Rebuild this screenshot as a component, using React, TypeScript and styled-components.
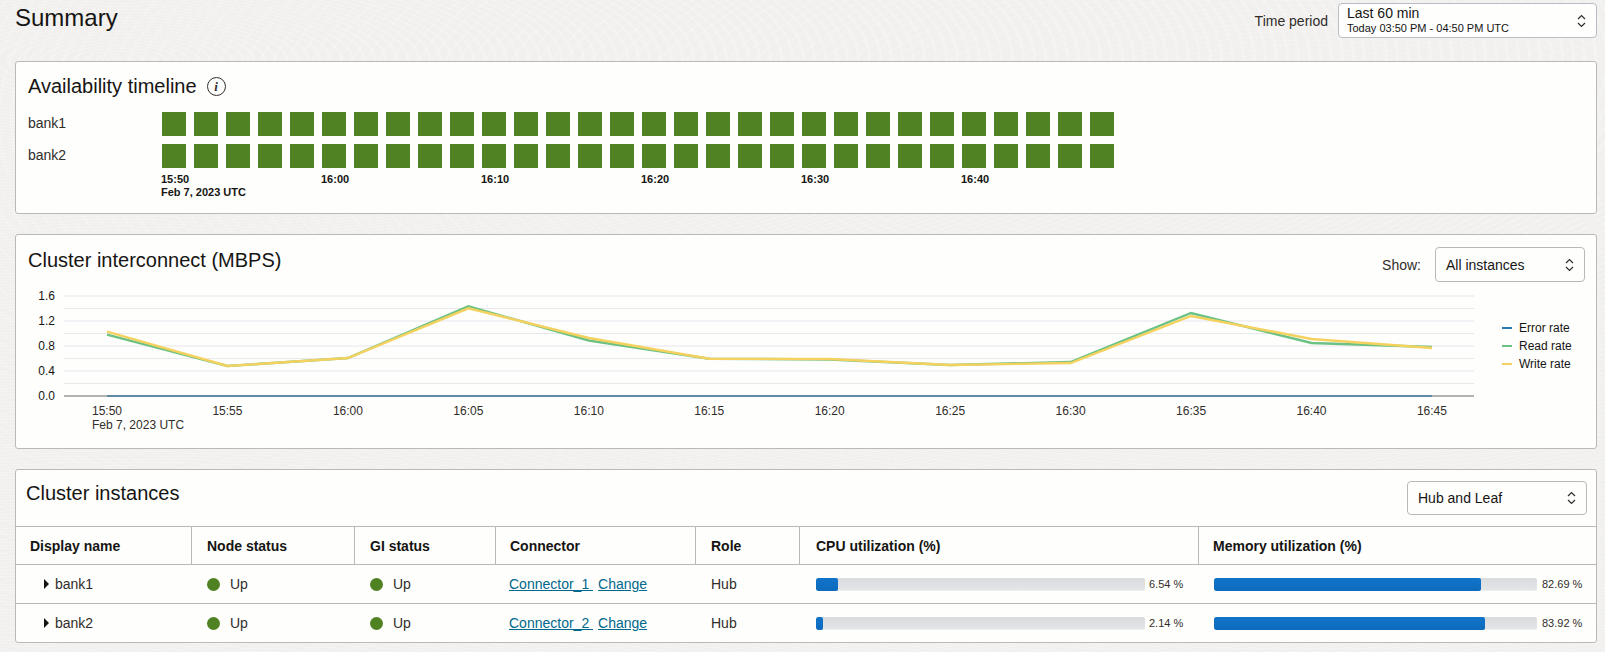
import React from 'react';
import styled, { createGlobalStyle } from 'styled-components';

const GlobalStyle = createGlobalStyle`
  html, body {
    margin: 0;
    padding: 0;
    background: #f1f0ee;
  }
  body {
    font-family: "Liberation Sans", Arial, sans-serif;
    color: #161513;
  }
`;

const Page = styled.div`
  width: 1605px;
  height: 652px;
  box-sizing: border-box;
  padding: 0 8px 0 15px;
  overflow: hidden;
  background-color: #f1f0ee;
  background-image:
    repeating-radial-gradient(ellipse 160% 100% at 120px 60px, rgba(255,255,255,0.2) 0 3px, transparent 3px 11px),
    repeating-radial-gradient(ellipse 120% 100% at 1300px 120px, rgba(255,255,255,0.16) 0 3px, transparent 3px 13px);
`;

const PageHeader = styled.header`
  height: 61px;
  display: flex;
  justify-content: space-between;
  align-items: flex-start;
`;

const PageTitle = styled.h1`
  margin: 4px 0 0;
  font-size: 24px;
  line-height: 28px;
  font-weight: 400;
`;

const PeriodGroup = styled.div`
  display: flex;
  align-items: center;
  gap: 10px;
  margin-top: 3px;
`;

const FieldLabel = styled.span`
  font-size: 14px;
  color: #312d2a;
`;

const SelectBox = styled.div<{ $w: number; $h: number }>`
  position: relative;
  box-sizing: border-box;
  width: ${p => p.$w}px;
  height: ${p => p.$h}px;
  padding: 0 10px;
  display: flex;
  flex-direction: column;
  justify-content: center;
  border: 1px solid #bcb8b3;
  border-radius: 4px;
  background: #fefefd;
  font-size: 14px;
  color: #161513;
`;

const PeriodBox = styled(SelectBox)`
  padding: 0 8px;
  border-color: #b9bdc4;
`;

const PeriodMain = styled.span`
  font-size: 14px;
  line-height: 16px;
`;

const PeriodSub = styled.span`
  font-size: 11px;
  line-height: 15px;
`;

const ChevronWrap = styled.span`
  position: absolute;
  right: 10px;
  top: 50%;
  transform: translateY(-50%);
  display: flex;
`;

const Chevrons = () => (
  <ChevronWrap>
    <svg width="9" height="14" viewBox="0 0 9 14" fill="none" stroke="#312d2a" strokeWidth="1.2">
      <path d="M1 5 L4.5 1.5 L8 5" />
      <path d="M1 9 L4.5 12.5 L8 9" />
    </svg>
  </ChevronWrap>
);

const Card = styled.section<{ $h: number; $mb?: number }>`
  box-sizing: border-box;
  width: 1582px;
  height: ${p => p.$h}px;
  margin-bottom: ${p => p.$mb ?? 21}px;
  border: 1px solid #bcb8b3;
  border-radius: 3px;
  background: #fefefc;
  overflow: hidden;
`;

const CardTitle = styled.h2`
  margin: 0;
  font-size: 20px;
  line-height: 24px;
  font-weight: 400;
`;

const TimelineBody = styled.div`
  padding: 12px 12px 0;
`;

const TitleRow = styled.div`
  display: flex;
  align-items: center;
  gap: 10px;
  height: 24px;
  margin-bottom: 14px;
`;

const InfoIcon = styled.span`
  box-sizing: border-box;
  width: 19px;
  height: 19px;
  border: 1.3px solid #312d2a;
  border-radius: 50%;
  display: flex;
  align-items: center;
  justify-content: center;
  font-family: "Liberation Serif", serif;
  font-style: italic;
  font-weight: 700;
  font-size: 13px;
  line-height: 1;
  color: #312d2a;
`;

const TimelineRow = styled.div`
  display: flex;
  align-items: center;
  height: 24px;
  margin-bottom: 8px;
`;

const RowLabel = styled.span`
  width: 134px;
  margin-top: -2px;
  font-size: 14px;
  color: #312d2a;
`;

const Squares = styled.div`
  display: flex;
  gap: 8px;
`;

const Square = styled.span`
  width: 24px;
  height: 24px;
  background: #508223;
`;

const TimeAxis = styled.div`
  display: flex;
  margin: -3px 0 0 133px;
`;

const TimeTick = styled.div`
  width: 156px;
  margin-right: 4px;
  font-size: 11px;
  line-height: 13px;
  font-weight: 700;
  color: #161513;
`;

const ChartHeader = styled.div`
  height: 53px;
  box-sizing: border-box;
  padding: 12px 11px 0 12px;
  display: flex;
  justify-content: space-between;
  align-items: flex-start;
`;

const ChartTitle = styled(CardTitle)`
  margin-top: 1px;
`;

const ShowGroup = styled.div`
  display: flex;
  align-items: center;
  gap: 14px;
`;

const ChartBody = styled.div`
  display: flex;
  padding-left: 12px;
`;

const LegendList = styled.ul`
  list-style: none;
  margin: 33px 0 0 14px;
  padding: 0;
  display: flex;
  flex-direction: column;
  gap: 4px;
`;

const LegendItem = styled.li`
  display: flex;
  align-items: center;
  gap: 7px;
  height: 14px;
  font-size: 12px;
  color: #161513;
`;

const LegendSwatch = styled.span<{ $c: string }>`
  width: 10px;
  height: 2.5px;
  background: ${p => p.$c};
`;

const TableHeader = styled.div`
  height: 56px;
  box-sizing: border-box;
  padding: 11px 9px 0 10px;
  display: flex;
  justify-content: space-between;
  align-items: flex-start;
`;

const GridRow = styled.div<{ $h: number }>`
  display: grid;
  grid-template-columns: 176px 163px 141px 200px 104px 399px 1fr;
  height: ${p => p.$h}px;
  box-sizing: border-box;
  border-top: 1px solid #bcb8b3;
  align-items: center;
`;

const HeadCell = styled.div<{ $last?: boolean; $pad: number }>`
  box-sizing: border-box;
  height: 100%;
  display: flex;
  align-items: center;
  padding-left: ${p => p.$pad}px;
  border-right: ${p => p.$last ? 'none' : '1px solid #bcb8b3'};
  font-size: 14px;
  font-weight: 700;
  color: #161513;
`;

const Cell = styled.div<{ $pad?: number }>`
  box-sizing: border-box;
  padding-left: ${p => p.$pad ?? 15}px;
  display: flex;
  align-items: center;
  font-size: 14px;
  color: #312d2a;
`;

const NameCell = styled(Cell)`
  padding-left: 28px;
  gap: 6px;
`;

const Caret = styled.span`
  width: 0;
  height: 0;
  border-top: 5px solid transparent;
  border-bottom: 5px solid transparent;
  border-left: 5px solid #161513;
`;

const StatusDot = styled.span`
  width: 13px;
  height: 13px;
  border-radius: 50%;
  background: #508223;
  margin-right: 10px;
`;

const LinkText = styled.a`
  color: #00688c;
  text-decoration: underline;
  white-space: pre;
  margin-right: 5px;
`;

const MeterTrack = styled.div<{ $w: number }>`
  width: ${p => p.$w}px;
  height: 13px;
  border-radius: 2px;
  background: linear-gradient(#d9dcdf, #e4e6e8);
  box-shadow: inset 0 -1px 0 #eceef0;
  overflow: hidden;
`;

const MeterFill = styled.div`
  height: 100%;
  border-radius: 2px;
  background: linear-gradient(#1174c9, #0e6bbd);
`;

const MeterValue = styled.span<{ $gap: number }>`
  margin-left: ${p => p.$gap}px;
  font-size: 11px;
  color: #312d2a;
  white-space: nowrap;
`;

const XS = Array.from({ length: 12 }, (_, i) => 79 + i * 120.45);
const TICKS = ['15:50', '15:55', '16:00', '16:05', '16:10', '16:15', '16:20', '16:25', '16:30', '16:35', '16:40', '16:45'];
const READ = [46.7, 78, 70, 18.3, 52.5, 70.7, 71.5, 77, 74, 25, 55, 59];
const WRITE = [43.7, 78, 70, 20.3, 50, 70.7, 71, 77, 75, 28, 51, 60];

const toPoints = (ys: number[]) => ys.map((y, i) => `${XS[i]},${y}`).join(' ');

const Chart = () => (
  <svg width="1460" height="150" viewBox="0 0 1460 150" style={{ display: 'block', flexShrink: 0 }}>
    {[0, 1, 2, 3, 4, 5, 6, 7].map(i => (
      <line
        key={i}
        x1="36"
        x2="1446"
        y1={8 + i * 12.5}
        y2={8 + i * 12.5}
        stroke={i % 2 === 0 ? '#f2f2f5' : '#e9e9ec'}
        strokeWidth={i % 2 === 0 ? 2 : 1}
      />
    ))}
    <line x1="36" x2="1446" y1="108" y2="108" stroke="#b5b2ae" strokeWidth="2" />
    <line x1={XS[0]} x2={XS[11]} y1="108" y2="108" stroke="#5f8aa3" strokeWidth="2" />
    <polyline points={toPoints(READ)} fill="none" stroke="#6cc284" strokeWidth="2.4" />
    <polyline points={toPoints(WRITE)} fill="none" stroke="#f5d25f" strokeWidth="2.4" />
    {['1.6', '1.2', '0.8', '0.4', '0.0'].map((v, i) => (
      <text key={v} x="27" y={12 + i * 25} textAnchor="end" fontSize="12" fill="#161513" fontFamily="Liberation Sans">{v}</text>
    ))}
    {TICKS.map((t, i) => (
      <text key={t} x={XS[i]} y="127" textAnchor="middle" fontSize="12" fill="#312d2a" fontFamily="Liberation Sans">{t}</text>
    ))}
    <text x="64" y="141" fontSize="12" fill="#312d2a" fontFamily="Liberation Sans">Feb 7, 2023 UTC</text>
  </svg>
);

const Meter = ({ value, track, pad, gap }: { value: number; track: number; pad: number; gap: number }) => (
  <Cell $pad={pad}>
    <MeterTrack $w={track}>
      <MeterFill style={{ width: `${value}%` }} />
    </MeterTrack>
    <MeterValue $gap={gap}>{value.toFixed(2)} %</MeterValue>
  </Cell>
);

const ROWS = [
  { name: 'bank1', connector: 'Connector_1', cpu: 6.54, mem: 82.69 },
  { name: 'bank2', connector: 'Connector_2', cpu: 2.14, mem: 83.92 },
];

const HEADS = [
  { label: 'Display name', pad: 14 },
  { label: 'Node status', pad: 15 },
  { label: 'GI status', pad: 15 },
  { label: 'Connector', pad: 14 },
  { label: 'Role', pad: 15 },
  { label: 'CPU utilization (%)', pad: 16 },
  { label: 'Memory utilization (%)', pad: 14 },
];

export default function App() {
  return (
    <Page>
      <GlobalStyle />
      <PageHeader>
        <PageTitle>Summary</PageTitle>
        <PeriodGroup>
          <FieldLabel>Time period</FieldLabel>
          <PeriodBox $w={259} $h={35}>
            <PeriodMain>Last 60 min</PeriodMain>
            <PeriodSub>Today 03:50 PM - 04:50 PM UTC</PeriodSub>
            <Chevrons />
          </PeriodBox>
        </PeriodGroup>
      </PageHeader>

      <Card $h={153} $mb={20}>
        <TimelineBody>
          <TitleRow>
            <CardTitle>Availability timeline</CardTitle>
            <InfoIcon>i</InfoIcon>
          </TitleRow>
          {['bank1', 'bank2'].map(name => (
            <TimelineRow key={name}>
              <RowLabel>{name}</RowLabel>
              <Squares>
                {Array.from({ length: 30 }, (_, i) => <Square key={i} />)}
              </Squares>
            </TimelineRow>
          ))}
          <TimeAxis>
            <TimeTick>15:50<br />Feb 7, 2023 UTC</TimeTick>
            <TimeTick>16:00</TimeTick>
            <TimeTick>16:10</TimeTick>
            <TimeTick>16:20</TimeTick>
            <TimeTick>16:30</TimeTick>
            <TimeTick>16:40</TimeTick>
          </TimeAxis>
        </TimelineBody>
      </Card>

      <Card $h={215} $mb={20}>
        <ChartHeader>
          <ChartTitle>Cluster interconnect (MBPS)</ChartTitle>
          <ShowGroup>
            <FieldLabel>Show:</FieldLabel>
            <SelectBox $w={150} $h={35}>
              All instances
              <Chevrons />
            </SelectBox>
          </ShowGroup>
        </ChartHeader>
        <ChartBody>
          <Chart />
          <LegendList>
            <LegendItem><LegendSwatch $c="#2a78ad" />Error rate</LegendItem>
            <LegendItem><LegendSwatch $c="#6cc284" />Read rate</LegendItem>
            <LegendItem><LegendSwatch $c="#f5d25f" />Write rate</LegendItem>
          </LegendList>
        </ChartBody>
      </Card>

      <Card $h={174} $mb={0}>
        <TableHeader>
          <CardTitle>Cluster instances</CardTitle>
          <SelectBox $w={180} $h={34}>
            Hub and Leaf
            <Chevrons />
          </SelectBox>
        </TableHeader>
        <GridRow $h={38}>
          {HEADS.map((h, i) => <HeadCell key={h.label} $pad={h.pad} $last={i === HEADS.length - 1}>{h.label}</HeadCell>)}
        </GridRow>
        {ROWS.map(r => (
          <GridRow key={r.name} $h={39}>
            <NameCell><Caret />{r.name}</NameCell>
            <Cell $pad={15}><StatusDot />Up</Cell>
            <Cell $pad={15}><StatusDot />Up</Cell>
            <Cell $pad={13}>
              <LinkText>{r.connector + ' '}</LinkText>
              <LinkText>Change</LinkText>
            </Cell>
            <Cell>Hub</Cell>
            <Meter value={r.cpu} track={329} pad={16} gap={4} />
            <Meter value={r.mem} track={323} pad={15} gap={5} />
          </GridRow>
        ))}
      </Card>
    </Page>
  );
}
